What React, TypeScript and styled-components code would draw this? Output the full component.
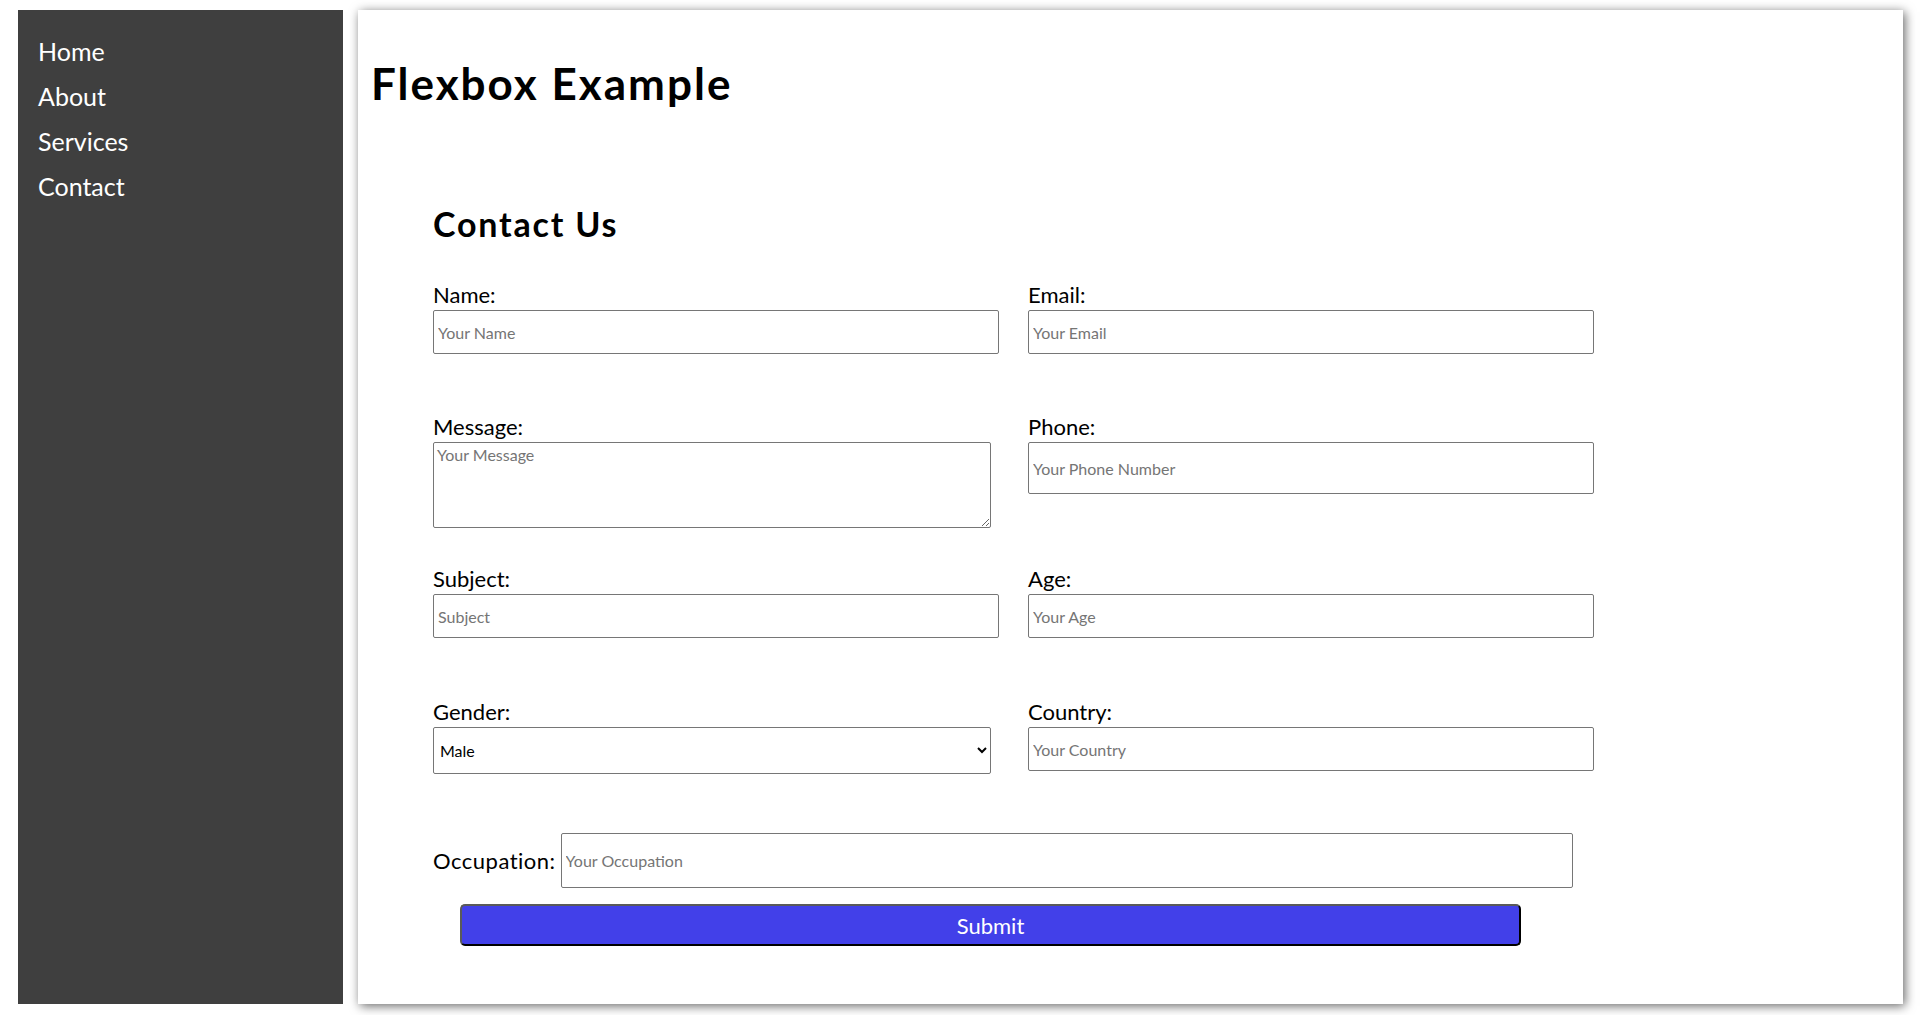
import React from "react";
import styled, { createGlobalStyle } from "styled-components";

const Global = createGlobalStyle`
  html, body { margin: 0; padding: 0; background: #ffffff; }
  body { font-family: "Lato", "Open Sans", sans-serif; color: #000; }
  * { box-sizing: border-box; }
`;

const Page = styled.div`
  display: flex;
  gap: 15px;
  height: 1015px;
  padding: 10px 17px 11px 18px;
`;

const Sidebar = styled.nav`
  width: 325px;
  flex-shrink: 0;
  background: #3f3f3f;
  padding: 19px 20px;
  display: flex;
  flex-direction: column;
`;

const NavLink = styled.a`
  color: #ffffff;
  text-decoration: none;
  font-size: 25px;
  line-height: 45px;
  height: 45px;
  font-family: "Lato", sans-serif;
`;

const Main = styled.main`
  flex: 1;
  background: #ffffff;
  box-shadow: 2px 2px 10px rgba(0, 0, 0, 0.6);
  padding: 0 13px;
`;

const Title = styled.h1`
  margin: 47px 0 0;
  font-size: 44px;
  line-height: 53px;
  font-weight: 700;
  letter-spacing: 2px;
`;

const Form = styled.form`
  margin: 93px 0 0 62px;
  width: 1161px;
`;

const FormTitle = styled.h2`
  margin: 0 0 36px;
  font-size: 34px;
  line-height: 41px;
  font-weight: 700;
  letter-spacing: 1.8px;
`;

const Row = styled.div<{ $after: number }>`
  display: grid;
  grid-template-columns: 566px 566px;
  column-gap: 29px;
  align-items: start;
  margin-bottom: ${(p) => p.$after}px;
`;

const Field = styled.div`
  display: flex;
  flex-direction: column;
`;

const Label = styled.label`
  font-size: 22px;
  line-height: 30px;
  height: 30px;
`;

const fieldBase = `
  font-family: "Lato", sans-serif;
  font-size: 16px;
  border: 1px solid #767676;
  border-radius: 2px;
  background: #fff;
  color: #000;
  &::placeholder { color: #757575; }
`;

const Input = styled.input<{ $h: number }>`
  ${fieldBase}
  width: 100%;
  height: ${(p) => p.$h}px;
  padding: 0 4px;
`;

const TextArea = styled.textarea`
  ${fieldBase}
  width: 558px;
  height: 86px;
  padding: 2px 3px;
  display: block;
  resize: both;
`;

const Select = styled.select`
  ${fieldBase}
  width: 558px;
  height: 47px;
  padding: 0 2px;
`;

const InlineRow = styled.div`
  display: flex;
  align-items: center;
  gap: 5px;
  margin-bottom: 16px;
`;

const InlineLabel = styled.label`
  font-size: 22px;
  line-height: 30px;
  letter-spacing: 0.5px;
  white-space: nowrap;
`;

const WideInput = styled.input`
  ${fieldBase}
  width: 1012px;
  height: 55px;
  padding: 0 4px;
`;

const Submit = styled.button`
  display: block;
  margin-left: 27px;
  width: 1061px;
  height: 42px;
  background: #4240e9;
  color: #fff;
  font-family: "Lato", sans-serif;
  font-size: 22px;
  border: 2px solid;
  border-color: #5a5a5a #000 #000 #5a5a5a;
  border-radius: 5px;
`;

export default function App() {
  return (
    <>
      <Global />
      <Page>
        <Sidebar>
          <NavLink href="#">Home</NavLink>
          <NavLink href="#">About</NavLink>
          <NavLink href="#">Services</NavLink>
          <NavLink href="#">Contact</NavLink>
        </Sidebar>
        <Main>
          <Title>Flexbox Example</Title>
          <Form onSubmit={(e) => e.preventDefault()}>
            <FormTitle>Contact Us</FormTitle>
            <Row $after={58}>
              <Field>
                <Label>Name:</Label>
                <Input $h={44} placeholder="Your Name" />
              </Field>
              <Field>
                <Label>Email:</Label>
                <Input $h={44} placeholder="Your Email" />
              </Field>
            </Row>
            <Row $after={36}>
              <Field>
                <Label>Message:</Label>
                <TextArea placeholder="Your Message" />
              </Field>
              <Field>
                <Label>Phone:</Label>
                <Input $h={52} placeholder="Your Phone Number" />
              </Field>
            </Row>
            <Row $after={59}>
              <Field>
                <Label>Subject:</Label>
                <Input $h={44} placeholder="Subject" />
              </Field>
              <Field>
                <Label>Age:</Label>
                <Input $h={44} placeholder="Your Age" />
              </Field>
            </Row>
            <Row $after={59}>
              <Field>
                <Label>Gender:</Label>
                <Select defaultValue="Male">
                  <option>Male</option>
                  <option>Female</option>
                  <option>Other</option>
                </Select>
              </Field>
              <Field>
                <Label>Country:</Label>
                <Input $h={44} placeholder="Your Country" />
              </Field>
            </Row>
            <InlineRow>
              <InlineLabel>Occupation:</InlineLabel>
              <WideInput placeholder="Your Occupation" />
            </InlineRow>
            <Submit type="submit">Submit</Submit>
          </Form>
        </Main>
      </Page>
    </>
  );
}
